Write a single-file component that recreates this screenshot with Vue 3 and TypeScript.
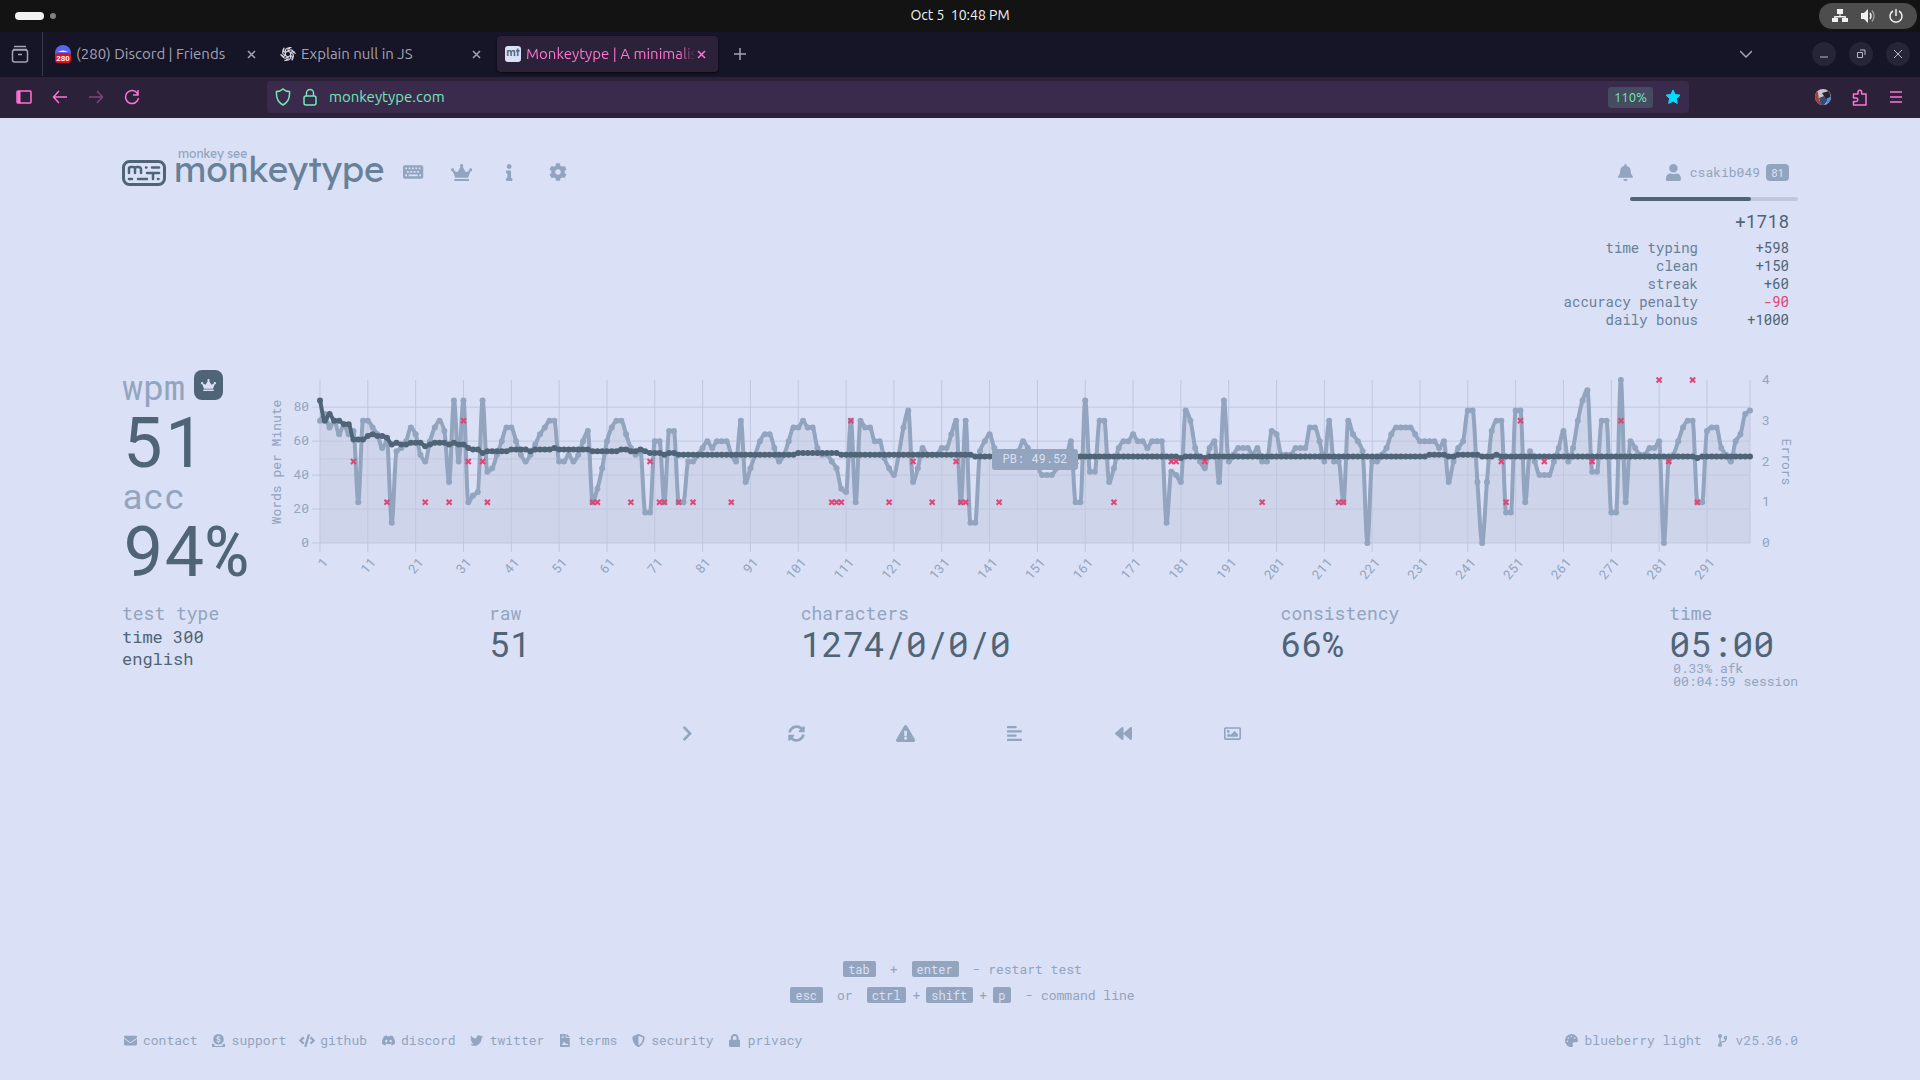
<script setup lang="ts">
import { h } from 'vue'

interface Glyph {
  box: string
  d: string
}

const glyphs: Record<string, Glyph> = {
  keyboard: {
    box: '0 0 576 512',
    d: 'M528 448H48c-26.500 0-48-21.500-48-48V112c0-26.500 21.500-48 48-48h480c26.500 0 48 21.500 48 48v288c0 26.500-21.500 48-48 48zM64 128v50h50v-50zM160 128v50h50v-50zM256 128v50h50v-50zM352 128v50h50v-50zM448 128v50h50v-50zM112 224v50h50v-50zM208 224v50h50v-50zM304 224v50h50v-50zM400 224v50h50v-50zM64 330v50h50v-50zM160 330v50h256v-50zM462 330v50h50v-50z',
  },
  crown: {
    box: '0 0 640 512',
    d: 'M528 448H112c-8.800 0-16 7.200-16 16v32c0 8.800 7.200 16 16 16h416c8.800 0 16-7.200 16-16v-32c0-8.800-7.200-16-16-16zm64-320c-26.500 0-48 21.500-48 48 0 7.100 1.600 13.700 4.400 19.800L476 239.200c-15.400 9.200-35.300 4-44.200-11.600L350.300 85C361 76.200 368 63 368 48c0-26.500-21.500-48-48-48s-48 21.500-48 48c0 15 7 28.200 17.700 37l-81.500 142.600c-8.900 15.600-28.900 20.800-44.200 11.600l-72.300-43.400c2.700-6 4.400-12.700 4.400-19.800 0-26.500-21.500-48-48-48S0 149.500 0 176s21.500 48 48 48c2.600 0 5.200-.4 7.700-.8L128 416h384l72.300-192.800c2.500.4 5.100.8 7.700.8 26.500 0 48-21.500 48-48s-21.500-48-48-48z',
  },
  info: {
    box: '0 0 192 512',
    d: 'M20 424h20V280H20c-11 0-20-9-20-20v-48c0-11 9-20 20-20h112c11 0 20 9 20 20v212h20c11 0 20 9 20 20v48c0 11-9 20-20 20H20c-11 0-20-9-20-20v-48c0-11 9-20 20-20zM96 0C56 0 24 32 24 72s32 72 72 72 72-32 72-72S136 0 96 0z',
  },
  cog: {
    box: '0 0 512 512',
    d: 'M487.4 315.7l-42.600-24.600c4.300-23.200 4.300-47 0-70.200l42.600-24.600c4.900-2.800 7.100-8.600 5.500-14-11.100-35.600-30-67.800-54.700-94.600-3.800-4.100-10-5.100-14.800-2.300L380.800 110c-17.900-15.400-38.500-27.300-60.800-35.100V25.800c0-5.600-3.900-10.500-9.400-11.700-36.700-8.200-74.300-7.800-109.200 0-5.500 1.200-9.400 6.100-9.400 11.700V75c-22.200 7.900-42.800 19.800-60.800 35.100L88.700 85.500c-4.900-2.800-11-1.900-14.800 2.300-24.700 26.700-43.600 58.900-54.700 94.600-1.700 5.400.6 11.200 5.500 14L67.300 221c-4.300 23.200-4.300 47 0 70.200l-42.600 24.600c-4.900 2.800-7.100 8.600-5.500 14 11.100 35.600 30 67.800 54.700 94.600 3.800 4.100 10 5.100 14.800 2.300l42.600-24.600c17.900 15.400 38.500 27.300 60.800 35.100v49.200c0 5.600 3.900 10.500 9.400 11.700 36.700 8.200 74.300 7.800 109.200 0 5.500-1.200 9.400-6.100 9.400-11.700v-49.200c22.200-7.900 42.800-19.800 60.800-35.100l42.600 24.600c4.900 2.800 11 1.900 14.800-2.300 24.700-26.700 43.600-58.900 54.700-94.600 1.500-5.500-.7-11.300-5.600-14.100zM256 336c-44.100 0-80-35.900-80-80s35.900-80 80-80 80 35.900 80 80-35.900 80-80 80z',
  },
  bell: {
    box: '0 0 448 512',
    d: 'M224 0c-17.700 0-32 14.300-32 32V51.200C119 66 64 130.600 64 208v18.800c0 47-17.300 92.400-48.500 127.600l-7.400 8.300c-8.400 9.400-10.400 22.900-5.300 34.400S19.400 416 32 416H416c12.600 0 24-7.400 29.200-18.900s3.100-25-5.300-34.400l-7.400-8.300C401.300 319.200 384 273.900 384 226.800V208c0-77.400-55-142-128-156.800V32c0-17.700-14.300-32-32-32zm64 448H160c0 35 29 64 64 64s64-29 64-64z',
  },
  user: {
    box: '0 0 448 512',
    d: 'M224 256c70.700 0 128-57.300 128-128S294.700 0 224 0 96 57.300 96 128s57.300 128 128 128zm89.600 32h-16.700c-22.200 10.200-46.900 16-72.900 16s-50.600-5.800-72.900-16h-16.700C60.200 288 0 348.200 0 422.400V464c0 26.500 21.500 48 48 48h352c26.500 0 48-21.500 48-48v-41.600c0-74.200-60.200-134.400-134.400-134.400z',
  },
  chevron: {
    box: '0 0 320 512',
    d: 'M285.500 273L91.100 467.300c-9.400 9.400-24.600 9.400-33.900 0l-22.700-22.700c-9.400-9.400-9.400-24.500 0-33.900L188.500 256 34.500 101.300c-9.300-9.400-9.300-24.500 0-33.900l22.700-22.700c9.400-9.400 24.600-9.400 33.900 0L285.500 239c9.400 9.400 9.400 24.600 0 34z',
  },
  sync: {
    box: '0 0 512 512',
    d: 'M370.720 133.280C339.458 104.008 298.888 87.962 255.848 88c-77.458.068-144.328 53.178-162.791 126.850-1.344 5.363-6.122 9.150-11.651 9.150H24.103c-7.498 0-13.194-6.807-11.807-14.176C33.933 94.924 134.813 8 256 8c66.448 0 126.791 26.136 171.315 68.685L463.030 40.970C478.149 25.851 504 36.559 504 57.941V192c0 13.255-10.745 24-24 24H345.941c-21.382 0-32.090-25.851-16.971-40.971l41.750-41.749zM32 296h134.059c21.382 0 32.090 25.851 16.971 40.971l-41.750 41.750c31.262 29.273 71.835 45.319 114.876 45.280 77.418-.07 144.315-53.144 162.787-126.849 1.344-5.363 6.122-9.150 11.651-9.150h57.304c7.498 0 13.194 6.807 11.807 14.176C478.067 417.076 377.187 504 256 504c-66.448 0-126.791-26.136-171.315-68.685L48.970 471.030C33.851 486.149 8 475.441 8 454.059V320c0-13.255 10.745-24 24-24z',
  },
  warning: {
    box: '0 0 576 512',
    d: 'M569.517 440.013C587.975 472.007 564.806 512 527.940 512H48.054c-36.937 0-59.999-40.055-41.577-71.987L246.423 23.985c18.467-32.009 64.720-31.951 83.154 0l239.940 416.028zM288 354c-25.405 0-46 20.595-46 46s20.595 46 46 46 46-20.595 46-46-20.595-46-46-46zm-43.673-165.346l7.418 136c.347 6.364 5.609 11.346 11.982 11.346h48.546c6.373 0 11.635-4.982 11.982-11.346l7.418-136c.375-6.874-5.098-12.654-11.982-12.654h-63.383c-6.884 0-12.356 5.780-11.981 12.654z',
  },
  align: {
    box: '0 0 448 512',
    d: 'M13 32h262c7 0 13 6 13 13v38c0 7-6 13-13 13H13C6 96 0 90 0 83V45c0-7 6-13 13-13zM16 160h416c9 0 16 7 16 16v32c0 9-7 16-16 16H16c-9 0-16-7-16-16v-32c0-9 7-16 16-16zM13 288h262c7 0 13 6 13 13v38c0 7-6 13-13 13H13c-7 0-13-6-13-13v-38c0-7 6-13 13-13zM16 416h416c9 0 16 7 16 16v32c0 9-7 16-16 16H16c-9 0-16-7-16-16v-32c0-9 7-16 16-16z',
  },
  backward: {
    box: '0 0 512 512',
    d: 'M11.500 280.600l192 160c20.600 17.200 52.500 2.800 52.500-24.600V96c0-27.400-31.900-41.800-52.500-24.600l-192 160c-15.300 12.800-15.300 36.400 0 49.200zm256 0l192 160c20.600 17.200 52.500 2.800 52.500-24.600V96c0-27.400-31.900-41.800-52.500-24.600l-192 160c-15.300 12.800-15.300 36.400 0 49.200z',
  },
  image: {
    box: '0 0 512 512',
    d: 'M464 64H48C21.490 64 0 85.490 0 112v288c0 26.510 21.490 48 48 48h416c26.510 0 48-21.490 48-48V112c0-26.510-21.490-48-48-48zm-6 336H54a6 6 0 0 1-6-6V118a6 6 0 0 1 6-6h404a6 6 0 0 1 6 6v276a6 6 0 0 1-6 6zM128 152c-22.091 0-40 17.909-40 40s17.909 40 40 40 40-17.909 40-40-17.909-40-40-40zM96 352h320v-80l-87.515-87.515c-4.686-4.686-12.284-4.686-16.971 0L192 304l-39.515-39.515c-4.686-4.686-12.284-4.686-16.971 0L96 304v48z',
  },
  envelope: {
    box: '0 0 512 512',
    d: 'M502.300 190.800c3.900-3.100 9.700-.2 9.700 4.700V400c0 26.500-21.500 48-48 48H48c-26.500 0-48-21.500-48-48V195.600c0-5 5.700-7.800 9.700-4.700 22.400 17.400 52.100 39.500 154.100 113.600 21.100 15.400 56.700 47.800 92.200 47.600 35.700.3 72-32.800 92.300-47.600 102-74.100 131.600-96.300 154-113.700zM256 320c23.200.4 56.600-29.200 73.400-41.400 132.700-96.300 142.800-104.700 173.400-128.700 5.800-4.500 9.200-11.500 9.200-18.900v-19c0-26.500-21.500-48-48-48H48c-26.500 0-48 21.500-48 48v19c0 7.400 3.400 14.300 9.200 18.900 30.600 23.900 40.700 32.400 173.400 128.700 16.800 12.200 50.200 41.800 73.400 41.400z',
  },
  donate: {
    box: '0 0 512 512',
    d: 'M256 0a208 208 0 1 0 0 416a208 208 0 1 0 0-416zM232 64h46v34c22 2 40 9 56 20l-24 38c-24-15-46-19-64-16-20 4-18 24 0 30l42 13c76 24 66 116-10 130v39h-46v-38c-24-3-46-12-64-25l26-38c24 17 52 24 76 19 20-4 20-26 2-32l-44-14c-70-22-68-108 4-126zM0 400c0-10 7-16 16-16h42c22 26 50 48 82 62H88v22h336v-22h-52c32-14 60-36 82-62h42c9 0 16 6 16 16v96c0 9-7 16-16 16H16c-9 0-16-7-16-16z',
  },
  code: {
    box: '0 0 640 512',
    d: 'M278 508l-61-18c-6-2-10-8-8-15L346 13c2-6 8-10 15-8l61 18c6 2 10 8 8 15L293 500c-2 6-9 10-15 8zM165 399l43-46c5-5 4-13-1-18l-91-79 91-79c5-5 6-13 1-18l-43-46c-5-5-12-5-17 0L4 247c-5 5-5 13 0 18l144 134c5 5 13 5 17 0zM475 399l-43-46c-5-5-4-13 1-18l91-79-91-79c-5-5-6-13-1-18l43-46c5-5 12-5 17 0l144 134c5 5 5 13 0 18L492 399c-5 5-13 5-17 0z',
  },
  discord: {
    box: '0 0 24 24',
    d: 'M20.317 4.370a19.791 19.791 0 0 0-4.885-1.515.074.074 0 0 0-.079.037c-.211.375-.445.865-.608 1.250-1.845-.276-3.680-.276-5.487 0-.164-.393-.406-.874-.618-1.250a.077.077 0 0 0-.079-.037 19.736 19.736 0 0 0-4.885 1.515.07.07 0 0 0-.032.028C.533 9.046-.319 13.580.099 18.058a.082.082 0 0 0 .031.056c2.053 1.508 4.041 2.423 5.993 3.029a.078.078 0 0 0 .084-.028c.462-.63.873-1.295 1.226-1.994a.076.076 0 0 0-.042-.106c-.653-.248-1.274-.55-1.872-.892l.364-.42a.074.074 0 0 1 .078-.010c3.928 1.793 8.180 1.793 12.061 0l.444.430c-.598.350-1.220.645-1.873.892a.077.077 0 0 0-.041.107c.360.698.772 1.363 1.225 1.993a.076.076 0 0 0 .084.029c1.961-.607 3.950-1.522 6.002-3.030a.077.077 0 0 0 .031-.055c.500-5.177-.838-9.674-3.549-13.660zM8.020 15.331c-1.183 0-2.157-1.086-2.157-2.419s.956-2.419 2.157-2.419c1.211 0 2.176 1.095 2.157 2.419 0 1.333-.956 2.419-2.157 2.419zm7.975 0c-1.183 0-2.157-1.086-2.157-2.419s.955-2.419 2.157-2.419c1.211 0 2.176 1.095 2.157 2.419 0 1.333-.946 2.419-2.157 2.419z',
  },
  twitter: {
    box: '0 0 512 512',
    d: 'M459.370 151.716c.325 4.548.325 9.097.325 13.645 0 138.720-105.583 298.558-298.558 298.558-59.452 0-114.680-17.219-161.137-47.106 8.447.974 16.568 1.299 25.340 1.299 49.055 0 94.213-16.568 130.274-44.832-46.132-.975-84.792-31.188-98.112-72.772 6.498.974 12.995 1.624 19.818 1.624 9.421 0 18.843-1.300 27.614-3.573-48.081-9.747-84.143-51.980-84.143-102.985v-1.299c13.969 7.797 30.214 12.670 47.431 13.319-28.264-18.843-46.781-51.005-46.781-87.391 0-19.492 5.197-37.360 14.294-52.954 51.655 63.675 129.300 105.258 216.365 109.807-1.624-7.797-2.599-15.918-2.599-24.040 0-57.828 46.782-104.934 104.934-104.934 30.213 0 57.502 12.670 76.670 33.137 23.715-4.548 46.456-13.320 66.599-25.340-7.798 24.366-24.366 44.833-46.132 57.827 21.117-2.273 41.584-8.122 60.426-16.243-14.292 20.791-32.161 39.308-52.628 54.253z',
  },
  contract: {
    box: '0 0 384 512',
    d: 'M224 136V0H24C11 0 0 11 0 24v464c0 13 11 24 24 24h336c13 0 24-11 24-24V160H248c-13 0-24-11-24-24zM64 64h96v32H64zM64 128h96v32H64zM320 432H70v-32c40 0 42-20 60-80 8-24 40-24 48 0l20 58c20-24 52-22 62 10 4 10 20 12 60 12zM384 122v6H256V0h6c6 0 12 3 17 7l98 98c4 5 7 11 7 17z',
  },
  shield: {
    box: '0 0 512 512',
    d: 'M466.500 83.700l-192-80a48 48 0 0 0-36.900 0l-192 80C27.700 91.100 16 108.600 16 128c0 198.500 114.500 335.700 221.500 380.300 11.800 4.900 25.100 4.900 36.900 0C360.100 472.600 496 349.300 496 128c0-19.400-11.700-36.900-29.500-44.300zM256 446V65l176 73.600c-3.300 151.400-82.100 261.100-176 307.400z',
  },
  lock: {
    box: '0 0 448 512',
    d: 'M400 224h-24v-72C376 68.200 307.800 0 224 0S72 68.200 72 152v72H48c-26.500 0-48 21.500-48 48v192c0 26.500 21.500 48 48 48h352c26.500 0 48-21.500 48-48V272c0-26.500-21.500-48-48-48zm-104 0H152v-72c0-39.700 32.300-72 72-72s72 32.300 72 72v72z',
  },
  palette: {
    box: '0 0 512 512',
    d: 'M204.300 5C104.900 24.400 24.800 104.300 5.200 203.400c-37 187 131.700 326.400 258.800 306.700 41.200-6.400 61.400-54.600 42.500-91.700-23.100-45.400 9.900-98.400 60.900-98.400h79.700c35.800 0 64.800-29.600 64.900-65.300C511.500 97.100 368.100-26.900 204.300 5zM96 320c-17.700 0-32-14.300-32-32s14.300-32 32-32 32 14.300 32 32-14.300 32-32 32zm32-128c-17.700 0-32-14.300-32-32s14.300-32 32-32 32 14.300 32 32-14.300 32-32 32zm128-64c-17.700 0-32-14.300-32-32s14.300-32 32-32 32 14.300 32 32-14.300 32-32 32zm128 64c-17.700 0-32-14.300-32-32s14.300-32 32-32 32 14.300 32 32-14.300 32-32 32z',
  },
  branch: {
    box: '0 0 384 512',
    d: 'M384 144c0-44.200-35.800-80-80-80s-80 35.800-80 80c0 36.400 24.300 67.100 57.500 76.800-.6 16.100-4.200 28.500-11 36.900-15.400 19.200-49.300 22.400-85.200 25.700-28.200 2.600-57.400 5.400-81.300 16.900v-144c32.500-10.200 56-40.500 56-76.300 0-44.200-35.800-80-80-80S0 35.800 0 80c0 35.800 23.500 66.100 56 76.300v199.300C23.500 365.900 0 396.200 0 432c0 44.200 35.800 80 80 80s80-35.800 80-80c0-34-21.200-63.100-51.200-74.600 3.100-5.200 7.800-9.800 14.900-13.400 16.200-8.200 40.400-10.400 66.100-12.800 42.200-3.900 90-8.400 118.200-43.400 14-17.400 21.100-39.800 21.600-67.900 31.600-10.800 54.400-40.700 54.400-75.900zM80 64c8.800 0 16 7.200 16 16s-7.200 16-16 16-16-7.200-16-16 7.200-16 16-16zm0 384c-8.800 0-16-7.200-16-16s7.200-16 16-16 16 7.200 16 16-7.200 16-16 16zm224-320c8.800 0 16 7.200 16 16s-7.200 16-16 16-16-7.200-16-16 7.200-16 16-16z',
  },
}

const Icon = (props: { name: string; size: number }) =>
  h(
    'svg',
    { viewBox: glyphs[props.name].box, height: props.size, fill: 'currentColor', 'aria-hidden': 'true' },
    [h('path', { d: glyphs[props.name].d, 'fill-rule': 'evenodd' })],
  )
Icon.props = ['name', 'size']

const navLinks = ['keyboard', 'crown', 'info', 'cog']
const navSizes: Record<string, number> = { keyboard: 18, crown: 17, info: 17, cog: 18 }

const xpRows = [
  { label: 'time typing', value: '+598' },
  { label: 'clean', value: '+150' },
  { label: 'streak', value: '+60' },
  { label: 'accuracy penalty', value: '-90' },
  { label: 'daily bonus', value: '+1000' },
]

const actions = [
  { icon: 'chevron', label: 'Next test' },
  { icon: 'sync', label: 'Repeat test' },
  { icon: 'warning', label: 'Practice words' },
  { icon: 'align', label: 'Toggle words history' },
  { icon: 'backward', label: 'Watch replay' },
  { icon: 'image', label: 'Save screenshot' },
]

const footerLinks = [
  { icon: 'envelope', label: 'contact' },
  { icon: 'donate', label: 'support' },
  { icon: 'code', label: 'github' },
  { icon: 'discord', label: 'discord' },
  { icon: 'twitter', label: 'twitter' },
  { icon: 'contract', label: 'terms' },
  { icon: 'shield', label: 'security' },
  { icon: 'lock', label: 'privacy' },
]

// Raw speed for every second of the test.
const raw: number[] = [
  72, 76, 68, 72, 64, 70, 64, 66, 24, 72, 72, 68, 64, 56, 60, 12, 54, 56, 60, 68,
  64, 52, 48, 60, 68, 72, 66, 36, 84, 48, 84, 24, 28, 30, 84, 42, 44, 52, 60, 68,
  68, 60, 52, 48, 52, 58, 64, 68, 72, 72, 48, 48, 52, 48, 52, 60, 66, 24, 32, 44,
  60, 68, 72, 72, 64, 56, 52, 54, 18, 18, 60, 60, 24, 66, 66, 24, 24, 48, 48, 52,
  56, 60, 56, 60, 60, 60, 52, 48, 72, 36, 44, 52, 60, 64, 64, 56, 48, 52, 60, 68,
  68, 72, 68, 68, 56, 52, 52, 48, 44, 32, 30, 72, 24, 72, 68, 68, 60, 60, 50, 44,
  40, 52, 68, 78, 36, 44, 56, 52, 52, 52, 56, 56, 64, 72, 24, 72, 12, 12, 54, 60,
  64, 56, 52, 52, 52, 52, 54, 60, 56, 52, 46, 40, 40, 40, 44, 48, 50, 60, 24, 24,
  84, 42, 42, 72, 72, 36, 44, 56, 60, 60, 64, 60, 60, 56, 60, 60, 60, 12, 42, 40,
  36, 78, 72, 56, 48, 44, 56, 60, 36, 84, 48, 52, 56, 56, 56, 52, 56, 48, 48, 66,
  64, 52, 52, 52, 56, 56, 56, 68, 68, 60, 48, 72, 48, 48, 24, 72, 64, 60, 54, 0,
  48, 48, 52, 56, 64, 68, 68, 68, 68, 64, 60, 60, 60, 60, 56, 60, 36, 48, 56, 60,
  78, 78, 36, 0, 36, 66, 72, 72, 18, 18, 78, 78, 24, 54, 48, 40, 40, 40, 48, 56,
  66, 48, 56, 72, 84, 90, 42, 42, 72, 72, 18, 18, 96, 24, 60, 56, 52, 52, 56, 56,
  60, 0, 48, 52, 60, 68, 72, 72, 24, 24, 66, 68, 68, 56, 52, 48, 60, 64, 76, 78,
]

// Running average, stored as [speed, seconds held].
const wpmRuns: [number, number][] = [
  [84, 1], [72, 1], [76, 1], [72, 2], [70, 2], [61, 3], [63, 1], [64, 1], [63, 2], [62, 1],
  [58, 1], [59, 1], [58, 2], [59, 3], [57, 1], [58, 1], [59, 3], [58, 1], [59, 1], [58, 2],
  [56, 1], [55, 2], [53, 1], [54, 5], [55, 4], [54, 1], [55, 4], [56, 1], [55, 7], [54, 6],
  [55, 2], [54, 2], [55, 1], [54, 1], [53, 3], [52, 1], [53, 2], [52, 25], [53, 9], [52, 28],
  [51, 43], [50, 1], [51, 4], [50, 1], [51, 46], [52, 4], [51, 2], [52, 5], [51, 3], [52, 1],
  [51, 41], [50, 1], [51, 11],
]
const wpm = wpmRuns.flatMap(([speed, held]) => Array<number>(held).fill(speed))

// Mistakes, as [second, count].
const errors: [number, number][] = [
  [8, 2], [15, 1], [23, 1], [28, 1], [31, 3], [32, 2], [35, 2], [36, 1], [58, 1], [59, 1],
  [66, 1], [70, 2], [72, 1], [73, 1], [76, 1], [79, 1], [87, 1], [108, 1], [109, 1], [110, 1],
  [112, 3], [120, 1], [125, 2], [129, 1], [134, 2], [135, 1], [136, 1], [143, 1], [159, 2],
  [167, 1], [179, 2], [180, 2], [186, 2], [198, 1], [214, 1], [215, 1], [248, 2], [249, 1],
  [252, 3], [257, 2], [267, 2], [273, 3], [281, 4], [283, 2], [288, 4], [289, 1],
]

const plot = { left: 55, right: 1485, top: 10, bottom: 173 }
const xAt = (second: number) => plot.left + ((second - 1) * (plot.right - plot.left)) / 299
const yAt = (speed: number) => plot.bottom - (speed * (plot.bottom - plot.top)) / 96

// Monotone cubic interpolation, so that the curve never overshoots a point.
function curve(values: number[]): string {
  const ys = values.map(yAt)
  const dx = xAt(2) - xAt(1)
  const slopes = ys.slice(1).map((y, i) => y - ys[i])
  const tangents = ys.map((_, i) => {
    if (i === 0) return slopes[0]
    if (i === ys.length - 1) return slopes[i - 1]
    const a = slopes[i - 1]
    const b = slopes[i]
    return a * b <= 0 ? 0 : (2 * a * b) / (a + b)
  })
  let d = `M${xAt(1)} ${ys[0]}`
  for (let i = 1; i < ys.length; i++) {
    const x0 = xAt(i)
    const x1 = xAt(i + 1)
    d += `C${x0 + dx / 3} ${ys[i - 1] + tangents[i - 1] / 3} ${x1 - dx / 3} ${ys[i] - tangents[i] / 3} ${x1} ${ys[i]}`
  }
  return d
}

const rawPath = curve(raw)
const wpmPath = curve(wpm)
const areaPath = `${rawPath}V${plot.bottom}H${plot.left}Z`
const seconds = Array.from({ length: 30 }, (_, i) => i * 10 + 1)
const speeds = [0, 20, 40, 60, 80]
const pbLine = yAt(49.52)
</script>

<template>
  <div class="screen">
    <header class="topbar">
      <div class="workspaces"><span class="pill"></span><span class="dot"></span></div>
      <time class="clock">Oct 5&nbsp; 10:48 PM</time>
      <div class="tray-side">
        <button class="tray" aria-label="System menu">
          <svg width="16" height="16" viewBox="0 0 16 16" fill="currentColor"><path d="M5 1h6v5H8.500v2H13a1 1 0 0 1 1 1v1h2v4h-6v-4h2.500V9.500h-9V10H6v4H0v-4h2V9a1 1 0 0 1 1-1h4.500V6H5z" /></svg>
          <svg width="16" height="16" viewBox="0 0 16 16"><path d="M1 5h3l4-4v14l-4-4H1z" fill="currentColor" /><path d="M10 5q2 3 0 6" fill="none" stroke="currentColor" stroke-width="1.500" /><path d="M12 2.500q4 5.500 0 11" fill="none" stroke="#999" stroke-width="1.500" /></svg>
          <svg width="16" height="16" viewBox="0 0 16 16" fill="none" stroke="currentColor" stroke-width="1.500"><path d="M5 3a6 6 0 1 0 6 0M8 1v7" /></svg>
        </button>
      </div>
    </header>

    <div class="tabstrip">
      <button class="recent" aria-label="Recent tabs">
        <svg width="18" height="18" viewBox="0 0 18 18" fill="none" stroke="currentColor" stroke-width="1.500"><path d="M3 1.500h12M2 4.500h14" /><rect x="1.500" y="5" width="15" height="12" rx="2" /><path d="M7 9.500h4" /></svg>
      </button>
      <div class="tab">
        <svg class="favicon" width="16" height="18" viewBox="0 0 16 18"><circle cx="8" cy="8" r="8" fill="#5865f2" /><path d="M3 7q5-3 10 0z" fill="#fff" /><rect y="8" width="16" height="10" rx="3" fill="#e01020" /><text x="8" y="16" text-anchor="middle" class="count">280</text></svg>
        <button class="title">(280) Discord | Friends</button>
        <button class="close" aria-label="Close tab"><svg width="9" height="9" viewBox="0 0 9 9"><path d="M1 1l7 7M8 1l-7 7" /></svg></button>
      </div>
      <div class="tab">
        <svg class="favicon" width="16" height="16" viewBox="0 0 16 16" fill="none" stroke="#d5d5dd" stroke-width="1.200">
          <path v-for="n in 6" :key="n" :transform="`rotate(${n * 60} 8 8)`" d="M5.500 6.500L9.500 4.200a2.700 2.700 0 0 1 4 3M8 5.300V3a2.600 2.600 0 0 1 3.600-1.200" />
        </svg>
        <button class="title">Explain null in JS</button>
        <button class="close" aria-label="Close tab"><svg width="9" height="9" viewBox="0 0 9 9"><path d="M1 1l7 7M8 1l-7 7" /></svg></button>
      </div>
      <div class="tab active">
        <span class="favicon mt">mt</span>
        <button class="title">Monkeytype | A minimalistic typing test</button>
        <button class="close" aria-label="Close tab"><svg width="9" height="9" viewBox="0 0 9 9"><path d="M1 1l7 7M8 1l-7 7" /></svg></button>
      </div>
      <button class="newtab" aria-label="New tab"><svg width="12" height="12" viewBox="0 0 12 12" stroke="currentColor" stroke-width="1.500"><path d="M6 0v12M0 6h12" /></svg></button>
      <button class="listtabs" aria-label="List all tabs"><svg width="12" height="8" viewBox="0 0 12 8" fill="none" stroke="currentColor" stroke-width="1.500"><path d="M0 1l6 6 6-6" /></svg></button>
      <div class="window-buttons">
        <button aria-label="Minimize"><svg width="10" height="10" viewBox="0 0 10 10"><path d="M1 8h8" /></svg></button>
        <button aria-label="Restore"><svg width="10" height="10" viewBox="0 0 10 10"><path d="M1.500 3.500h5v5h-5zM4 1h5v5" /></svg></button>
        <button aria-label="Close"><svg width="10" height="10" viewBox="0 0 10 10"><path d="M1 1l8 8M9 1l-8 8" /></svg></button>
      </div>
    </div>

    <div class="toolbar">
      <div class="nav-buttons">
        <button aria-label="Sidebar"><svg width="16" height="14" viewBox="0 0 16 14" fill="none" stroke="currentColor" stroke-width="1.500"><rect x="1" y="1" width="14" height="12" rx="1" /><path d="M3 1v12" stroke-width="3" /></svg></button>
        <button aria-label="Back"><svg width="16" height="14" viewBox="0 0 16 14" fill="none" stroke="currentColor" stroke-width="1.500"><path d="M15 7H1.500M7 1L1.500 7 7 13" /></svg></button>
        <button aria-label="Forward" class="dim"><svg width="16" height="14" viewBox="0 0 16 14" fill="none" stroke="currentColor" stroke-width="1.500"><path d="M1 7h13.500M9 1l5.500 6L9 13" /></svg></button>
        <button aria-label="Reload"><svg width="16" height="16" viewBox="0 0 16 16" fill="none" stroke="currentColor" stroke-width="1.500"><path d="M13.500 4.500A6.500 6.500 0 1 0 14.500 9M14 1v5H9" /></svg></button>
      </div>
      <div class="urlbar">
        <svg width="16" height="18" viewBox="0 0 16 18" fill="none" stroke="currentColor" stroke-width="1.500"><path d="M8 1C6 3 4 3.500 1.500 3.500 1 10 3 14.500 8 17c5-2.500 7-7 6.500-13.500C12 3.500 10 3 8 1z" /></svg>
        <svg width="14" height="18" viewBox="0 0 14 18" fill="none" stroke="currentColor" stroke-width="1.500"><rect x="1" y="8" width="12" height="9" rx="2" /><path d="M3.500 8V5a3.500 3.500 0 0 1 7 0v3" /></svg>
        <input type="text" value="monkeytype.com" aria-label="Address" />
        <button class="zoom">110%</button>
        <svg width="16" height="16" viewBox="0 0 16 16" fill="#00ddff"><path d="M8 1l2.100 4.500 4.900.6-3.600 3.400.9 4.900L8 12l-4.300 2.400.9-4.900L1 6.100l4.900-.6z" stroke="#00ddff" stroke-linejoin="round" /></svg>
      </div>
      <div class="tools">
        <button aria-label="Account">
          <svg width="16" height="16" viewBox="0 0 16 16"><defs><clipPath id="face"><circle cx="8" cy="8" r="8" /></clipPath></defs><g clip-path="url(#face)"><path d="M0 0h16v16H0z" fill="#c9c4cc" /><path d="M0 3h3l1 8 3 5H0z" fill="#a3402f" /><path d="M4 9l5-2 4 4-4 5H6z" fill="#354a78" /><path d="M7 4l7-2 2 6-5 2z" fill="#2a2130" /><path d="M12 10l4-3v9h-5z" fill="#4f8fd0" /></g></svg>
        </button>
        <button aria-label="Extensions"><svg width="16" height="18" viewBox="0 0 16 18" fill="none" stroke="currentColor" stroke-width="1.500" stroke-linejoin="round"><path d="M1.500 6H6V4a1.800 1.800 0 0 1 3.600 0v2H14v11H1.500v-3.500H4a1.800 1.800 0 0 0 0-3.600H1.500z" /></svg></button>
        <button aria-label="Menu"><svg width="14" height="12" viewBox="0 0 14 12" stroke="currentColor" stroke-width="1.500"><path d="M1 1h12M1 6h12M1 11h12" /></svg></button>
      </div>
    </div>

    <div class="page">
      <header class="site-header">
        <a class="logo" href="#">
          <svg width="44" height="26" viewBox="0 0 44 26" fill="none" stroke="currentColor" stroke-width="2.500" stroke-linecap="round"><rect x="1.500" y="1.500" width="41" height="23" rx="6" stroke-width="3" /><path d="M7 13V8.500q0-1.500 2-1.500h2q2 0 2 2v4M13 9q0-2 2-2h1q3 0 3 2.500V13M24 7.500h.5M30 7.500h7M25 13h12M31 13v6M7 19h3M16 19h9M36 19h.5" /></svg>
          <span class="wordmark"><small>monkey see</small>monkeytype</span>
        </a>
        <nav class="site-nav">
          <a v-for="name in navLinks" :key="name" href="#" :aria-label="name"><Icon :name="name" :size="navSizes[name]" /></a>
        </nav>
        <div class="account">
          <div class="account-row">
            <button class="bell" aria-label="Notifications"><Icon name="bell" :size="17" /></button>
            <a class="profile" href="#"><Icon name="user" :size="17" /><span>csakib049</span><b>81</b></a>
          </div>
          <div class="xp-bar"><div class="xp-fill"></div></div>
          <div class="xp-total">+1718</div>
          <table class="xp-table">
            <tbody>
              <tr v-for="row in xpRows" :key="row.label" :class="{ negative: row.value.startsWith('-') }">
                <th scope="row">{{ row.label }}</th>
                <td>{{ row.value }}</td>
              </tr>
            </tbody>
          </table>
        </div>
      </header>

      <main>
        <section class="result">
          <div class="headline">
            <div class="big-label">wpm <span class="crown"><Icon name="crown" :size="12" /></span></div>
            <div class="big-value">51</div>
            <div class="big-label">acc</div>
            <div class="big-value">94%</div>
          </div>
          <svg class="chart" viewBox="0 0 1533 225" role="img" aria-label="Speed over time">
            <g class="grid">
              <path v-for="s in seconds" :key="s" :d="`M${xAt(s)} 10V182`" />
              <path d="M1485 10V173" />
              <path v-for="v in speeds" :key="v" :d="`M47 ${yAt(v)}H1485`" />
              <path class="pb" :d="`M55 ${pbLine}H1485`" />
            </g>
            <path class="area" :d="areaPath" />
            <path class="raw-line" :d="rawPath" />
            <g class="raw-dots"><circle v-for="(v, i) in raw" :key="i" :cx="xAt(i + 1)" :cy="yAt(v)" r="3" /></g>
            <path class="wpm-line" :d="wpmPath" />
            <g class="wpm-dots"><circle v-for="(v, i) in wpm" :key="i" :cx="xAt(i + 1)" :cy="yAt(v)" r="3" /></g>
            <g class="errors">
              <path v-for="[s, n] in errors" :key="s" :d="`M${xAt(s) - 2.5} ${yAt(n * 24) - 2.5}l5 5m0-5l-5 5`" />
            </g>
            <rect class="pb-box" x="727" y="79" width="86" height="21" rx="3" />
            <text class="pb-text" x="770" y="93" text-anchor="middle">PB: 49.52</text>
            <text v-for="v in speeds" :key="v" x="44" :y="yAt(v) + 4" text-anchor="end">{{ v }}</text>
            <text v-for="n in 5" :key="n" x="1497" :y="yAt((n - 1) * 24) + 4">{{ n - 1 }}</text>
            <text v-for="s in seconds" :key="s" :transform="`translate(${xAt(s) + 1} 186) rotate(-50)`" y="10" text-anchor="end">{{ s }}</text>
            <text transform="translate(16 92) rotate(-90)" text-anchor="middle">Words per Minute</text>
            <text transform="translate(1517 92) rotate(90)" text-anchor="middle">Errors</text>
          </svg>
        </section>

        <section class="stats">
          <div class="stat"><div class="label">test type</div><div class="small-value">time 300<br />english</div></div>
          <div class="stat"><div class="label">raw</div><div class="value">51</div></div>
          <div class="stat"><div class="label">characters</div><div class="value">1274/0/0/0</div></div>
          <div class="stat"><div class="label">consistency</div><div class="value">66%</div></div>
          <div class="stat"><div class="label">time</div><div class="value">05:00</div><div class="session">0.33% afk<br />00:04:59 session</div></div>
        </section>

        <div class="actions">
          <button v-for="a in actions" :key="a.icon" :aria-label="a.label"><Icon :name="a.icon" :size="17" /></button>
        </div>
      </main>

      <div class="tips">
        <div class="tip"><kbd>tab</kbd><span>+</span><kbd>enter</kbd><span>- restart test</span></div>
        <div class="tip"><kbd>esc</kbd><span>or</span><span class="combo"><kbd>ctrl</kbd>+<kbd>shift</kbd>+<kbd>p</kbd></span><span>- command line</span></div>
      </div>

      <footer>
        <nav class="links">
          <a v-for="l in footerLinks" :key="l.label" href="#"><span class="slot"><Icon :name="l.icon" :size="13" /></span>{{ l.label }}</a>
        </nav>
        <nav class="links">
          <a href="#"><span class="slot"><Icon name="palette" :size="13" /></span>blueberry light</a>
          <a href="#"><span class="slot"><Icon name="branch" :size="13" /></span>v25.36.0</a>
        </nav>
      </footer>
    </div>
  </div>
</template>

<style>
body {
  margin: 0;
  background: #dae0f5;
}
</style>

<style scoped>
.screen {
  display: flex;
  flex-direction: column;
  min-height: 100vh;
  font-family: "Ubuntu", "Noto Sans", sans-serif;
  font-size: 15px;
}
button {
  padding: 0;
  border: 0;
  background: none;
  color: inherit;
  font: inherit;
}
a {
  color: inherit;
  text-decoration: none;
}
svg {
  display: block;
  flex: none;
}

.topbar {
  display: flex;
  align-items: center;
  height: 32px;
  background: #131313;
  color: #f2f2f2;
}
.workspaces,
.tray-side {
  flex: 1;
  display: flex;
  align-items: center;
}
.workspaces {
  gap: 6px;
}
.pill {
  width: 29px;
  height: 8px;
  margin-left: 15px;
  border-radius: 4px;
  background: #f2f2f2;
}
.dot {
  width: 6px;
  height: 6px;
  border-radius: 3px;
  background: #808080;
}
.clock {
  padding-bottom: 2px;
  font-size: 14px;
}
.tray-side {
  justify-content: flex-end;
}
.tray {
  display: flex;
  align-items: center;
  gap: 12px;
  height: 26px;
  margin-right: 3px;
  padding: 0 13px;
  border-radius: 13px;
  background: #4d4d4d;
}

.tabstrip {
  display: flex;
  align-items: center;
  height: 44px;
  padding-bottom: 1px;
  background: #161427;
  color: #a3a4b3;
}
.recent {
  display: flex;
  align-items: center;
  justify-content: center;
  width: 43px;
  height: 44px;
  padding-right: 2px;
  border-right: 1px solid #3a384a;
}
.tab {
  display: flex;
  align-items: center;
  width: 221px;
  height: 36px;
  box-sizing: border-box;
  margin-left: 4px;
  padding: 0 12px 0 8px;
  border-radius: 4px;
}
.tab.active {
  background: #2b2138;
  color: #ff74d4;
  box-shadow: 0 1px 2px #0a0812;
}
.favicon {
  margin-right: 5px;
}
.count {
  font: bold 8px "Liberation Sans", sans-serif;
  fill: #fff;
}
.mt {
  width: 16px;
  height: 16px;
  border-radius: 3px;
  background: #dae0f5;
  color: #506477;
  font: 600 10px/14px "Lexend Deca", "Inter", sans-serif;
  text-align: center;
}
.title {
  flex: 1;
  overflow: hidden;
  padding-bottom: 1px;
  white-space: nowrap;
  text-align: left;
}
.active .title {
  mask-image: linear-gradient(to right, #000 90%, transparent);
}
.close {
  margin-left: 1px;
}
.close svg {
  stroke: currentColor;
  stroke-width: 1.500;
}
.newtab {
  margin-left: 16px;
}
.listtabs {
  margin-left: auto;
}
.window-buttons {
  display: flex;
  gap: 13px;
  margin: 0 10px 0 60px;
}
.window-buttons button {
  display: flex;
  align-items: center;
  justify-content: center;
  width: 24px;
  height: 24px;
  border-radius: 12px;
  background: #262437;
}
.window-buttons svg {
  fill: none;
  stroke: #b9b9c6;
  stroke-width: 1;
}

.toolbar {
  display: flex;
  align-items: center;
  height: 40px;
  padding-bottom: 1px;
  background: #2b2138;
  color: #ff74d4;
}
.nav-buttons {
  display: flex;
  gap: 20px;
  width: 251px;
  padding-left: 16px;
}
.dim {
  opacity: 0.4;
}
.urlbar {
  flex: 1;
  display: flex;
  align-items: center;
  gap: 12px;
  height: 32px;
  box-sizing: border-box;
  padding: 0 8px;
  border-radius: 4px;
  background: #3a2b4c;
  color: #74e8b5;
}
.urlbar input {
  flex: 1;
  min-width: 0;
  padding: 0 0 1px;
  border: 0;
  background: none;
  color: inherit;
  font: inherit;
}
.zoom {
  width: 45px;
  height: 21px;
  border-radius: 3px;
  background: #454b60;
  font-size: 13px;
}
.tools {
  display: flex;
  align-items: center;
  justify-content: flex-end;
  gap: 21px;
  width: 214px;
  padding-right: 17px;
}

.page {
  flex: 1;
  display: flex;
  flex-direction: column;
  padding: 27px 122px 32px;
  background: #dae0f5;
  color: #92a4be;
  font: 13px/16px "Roboto Mono", "Liberation Mono", monospace;
}
.site-header {
  display: flex;
  align-items: flex-start;
  min-height: 225px;
}
.logo {
  display: flex;
  gap: 8px;
  color: #506477;
}
.logo svg {
  margin-top: 15px;
}
.wordmark {
  position: relative;
  color: #678198;
  font: 35px/48px "Lexend Deca", "Inter", sans-serif;
}
.wordmark small {
  position: absolute;
  left: 4px;
  top: 2px;
  color: #92a4be;
  font-size: 12px;
  line-height: 14px;
}
.site-nav {
  display: flex;
  margin-left: 5px;
  padding-top: 15px;
}
.site-nav a {
  display: flex;
  align-items: center;
  justify-content: center;
  width: 48px;
  height: 24px;
}
.account {
  display: flex;
  flex-direction: column;
  align-items: flex-end;
  margin-left: auto;
  color: #506477;
}
.account-row {
  display: flex;
  align-items: center;
  gap: 33px;
  height: 24px;
  padding: 15px 9px 0 0;
  color: #92a4be;
}
.profile {
  display: flex;
  align-items: center;
}
.profile span {
  margin: 0 6px 0 9px;
}
.profile b {
  width: 23px;
  border-radius: 4px;
  background: #92a4be;
  color: #dae0f5;
  font: 11px/17px "Roboto Mono", "Liberation Mono", monospace;
  text-align: center;
}
.xp-bar {
  width: 168px;
  height: 4px;
  margin-top: 13px;
  border-radius: 2px;
  background: #c1c7df;
}
.xp-fill {
  width: 72%;
  height: 4px;
  border-radius: 2px;
  background: #506477;
}
.xp-total {
  margin: 8px 9px 0 0;
  font-size: 18px;
  line-height: 24px;
}
.xp-table {
  margin: 6px 9px 0 0;
  border-collapse: collapse;
  font-size: 14px;
  line-height: 18px;
  text-align: right;
}
.xp-table th {
  padding: 0;
  color: #678198;
  font-weight: 400;
}
.xp-table td {
  width: 91px;
  padding: 0;
}
.negative td {
  color: #df4576;
}

main {
  flex: 1;
}
.result {
  display: flex;
  gap: 16px;
}
.headline {
  width: 127px;
  margin-top: -2px;
}
.big-label {
  display: flex;
  gap: 9px;
  font-size: 35px;
  line-height: 36px;
  white-space: nowrap;
}
.crown {
  display: flex;
  align-items: center;
  justify-content: center;
  width: 29px;
  height: 30px;
  margin-top: 2px;
  border-radius: 8px;
  background: #506477;
  color: #dae0f5;
}
.big-value {
  color: #506477;
  font-size: 70px;
  line-height: 73px;
}
.chart {
  flex: 1;
  min-width: 0;
  height: auto;
  overflow: visible;
}
.chart text {
  fill: #92a4be;
  font-size: 13px;
}
.chart .pb-text {
  fill: #dae0f5;
  font-size: 12px;
}
.grid {
  stroke: #c1c7df;
  stroke-width: 1;
}
.area {
  fill: #c1c7df;
  fill-opacity: 0.5;
}
.raw-line,
.wpm-line {
  fill: none;
  stroke: #92a4be;
  stroke-width: 4;
  stroke-linejoin: round;
}
.wpm-line {
  stroke: #506477;
}
.raw-dots,
.pb-box {
  fill: #92a4be;
}
.wpm-dots {
  fill: #506477;
}
.errors {
  stroke: #df4576;
  stroke-width: 2;
}

.stats {
  display: flex;
  justify-content: space-between;
  margin-top: 7px;
  color: #506477;
}
.label {
  color: #92a4be;
  font-size: 18px;
  line-height: 22px;
}
.small-value {
  padding-top: 2px;
  font-size: 17px;
  line-height: 22px;
}
.value {
  font-size: 35px;
  line-height: 38px;
}
.session {
  padding-left: 4px;
  color: #92a4be;
  line-height: 13px;
}
.actions {
  display: flex;
  justify-content: center;
  margin-top: 27px;
}
.actions button {
  display: flex;
  align-items: center;
  justify-content: center;
  width: 109px;
  height: 36px;
}

.tips {
  display: flex;
  flex-direction: column;
  align-items: center;
  gap: 10px;
  margin-bottom: 29px;
  padding-left: 5px;
}
.tip {
  display: flex;
  gap: 14px;
  white-space: pre;
}
.combo {
  display: flex;
  gap: 6px;
}
kbd {
  padding: 0 6px 0 5px;
  border-radius: 2px;
  background: #92a4be;
  color: #dae0f5;
  font: inherit;
  font-size: 12px;
}
footer {
  display: flex;
  justify-content: space-between;
}
.links {
  display: flex;
  gap: 13px;
}
.links a {
  display: flex;
  align-items: center;
  gap: 5px;
}
.slot {
  display: flex;
  justify-content: center;
  width: 16px;
}
</style>
